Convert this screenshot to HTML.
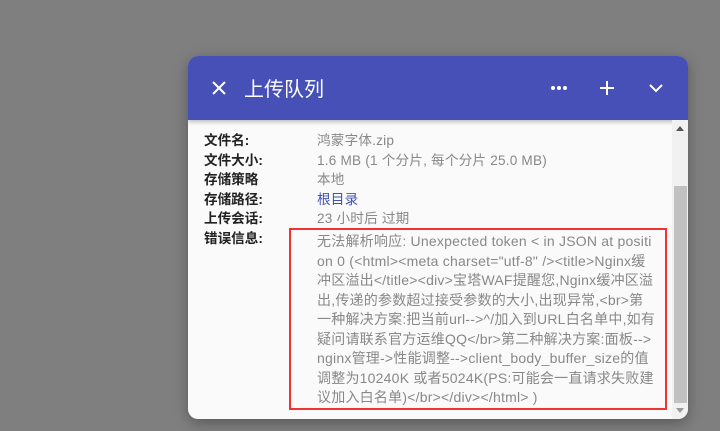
<!DOCTYPE html>
<html><head><meta charset="utf-8"><style>
*{margin:0;padding:0;box-sizing:border-box}
body{width:720px;height:431px;background:#7f7f7f;position:relative;overflow:hidden;font-family:"Liberation Sans","Noto Sans CJK SC",sans-serif}
.card{position:absolute;left:188px;top:56px;width:500px;height:363px;background:#fafafa;border-radius:10px;overflow:hidden;box-shadow:0 4px 14px rgba(0,0,0,.3)}
.hdr{position:absolute;left:0;top:0;width:500px;height:64px;background:#4650b6;color:#fff;box-shadow:0 2px 4px rgba(0,0,0,.25)}
.t{position:absolute;left:56px;top:19px;font-size:20px;font-family:"Noto Sans CJK SC",sans-serif;line-height:26px}
.sb{position:absolute;left:484px;top:64px;width:16px;height:299px;background:#f1f1f1}
.th{position:absolute;left:486px;top:130px;width:13px;height:217px;background:#c1c1c1}
.r{position:absolute;font-size:13.6px;line-height:20px;white-space:nowrap}
.l{left:16px;color:#222;font-weight:bold}
.v{left:129px;color:#888;letter-spacing:.2px}
.box{position:absolute;left:101px;top:172px;width:378px;height:182px;border:2px solid #f03434}
.e{position:absolute;left:129px;font-size:14px;line-height:19.5px;color:#888;white-space:nowrap;letter-spacing:.22px}
</style></head><body>
<div class="card">
<div class="hdr">
<svg style="position:absolute;left:24px;top:25px" width="14" height="14"><path d="M1 1L13 13M13 1L1 13" stroke="#fff" stroke-width="2"/></svg>
<div class="t">上传队列</div>
<svg style="position:absolute;left:362px;top:29px" width="18" height="6"><circle cx="3" cy="3" r="2" fill="#fff"/><circle cx="9" cy="3" r="2" fill="#fff"/><circle cx="15" cy="3" r="2" fill="#fff"/></svg>
<svg style="position:absolute;left:412px;top:25px" width="14" height="14"><path d="M7 0V14M0 7H14" stroke="#fff" stroke-width="2"/></svg>
<svg style="position:absolute;left:461px;top:28px" width="14" height="9"><path d="M1 1L7 7L13 1" stroke="#fff" stroke-width="2" fill="none"/></svg>
</div>
<div class="sb"></div><div class="th"></div>
<svg style="position:absolute;left:488px;top:70px" width="8" height="5"><path d="M0 5L4 0L8 5Z" fill="#555"/></svg>
<svg style="position:absolute;left:488px;top:352px" width="8" height="5"><path d="M0 0L4 5L8 0Z" fill="#999"/></svg>
<div class="r l" style="top:75px">文件名:</div><div class="r v" style="top:75px">鸿蒙字体.zip</div>
<div class="r l" style="top:95px">文件大小:</div><div class="r v" style="top:95px">1.6 MB (1 个分片, 每个分片 25.0 MB)</div>
<div class="r l" style="top:114px">存储策略</div><div class="r v" style="top:114px">本地</div>
<div class="r l" style="top:134px">存储路径:</div><div class="r v" style="top:134px;color:#3f51b5">根目录</div>
<div class="r l" style="top:153px">上传会话:</div><div class="r v" style="top:153px">23 小时后 过期</div>
<div class="r l" style="top:173px">错误信息:</div>
<div class="box"></div>
<div class="e" style="top:176px">无法解析响应: Unexpected token &lt; in JSON at positi</div>
<div class="e" style="top:195.5px">on 0 (&lt;html&gt;&lt;meta charset="utf-8" /&gt;&lt;title&gt;Nginx缓</div>
<div class="e" style="top:215px">冲区溢出&lt;/title&gt;&lt;div&gt;宝塔WAF提醒您,Nginx缓冲区溢</div>
<div class="e" style="top:234.5px">出,传递的参数超过接受参数的大小,出现异常,&lt;br&gt;第</div>
<div class="e" style="top:254px">一种解决方案:把当前url--&gt;^/加入到URL白名单中,如有</div>
<div class="e" style="top:273.5px">疑问请联系官方运维QQ&lt;/br&gt;第二种解决方案:面板--&gt;</div>
<div class="e" style="top:293px">nginx管理-&gt;性能调整--&gt;client_body_buffer_size的值</div>
<div class="e" style="top:312.5px">调整为10240K 或者5024K(PS:可能会一直请求失败建</div>
<div class="e" style="top:332px">议加入白名单)&lt;/br&gt;&lt;/div&gt;&lt;/html&gt; )</div>
</div>
</body></html>
